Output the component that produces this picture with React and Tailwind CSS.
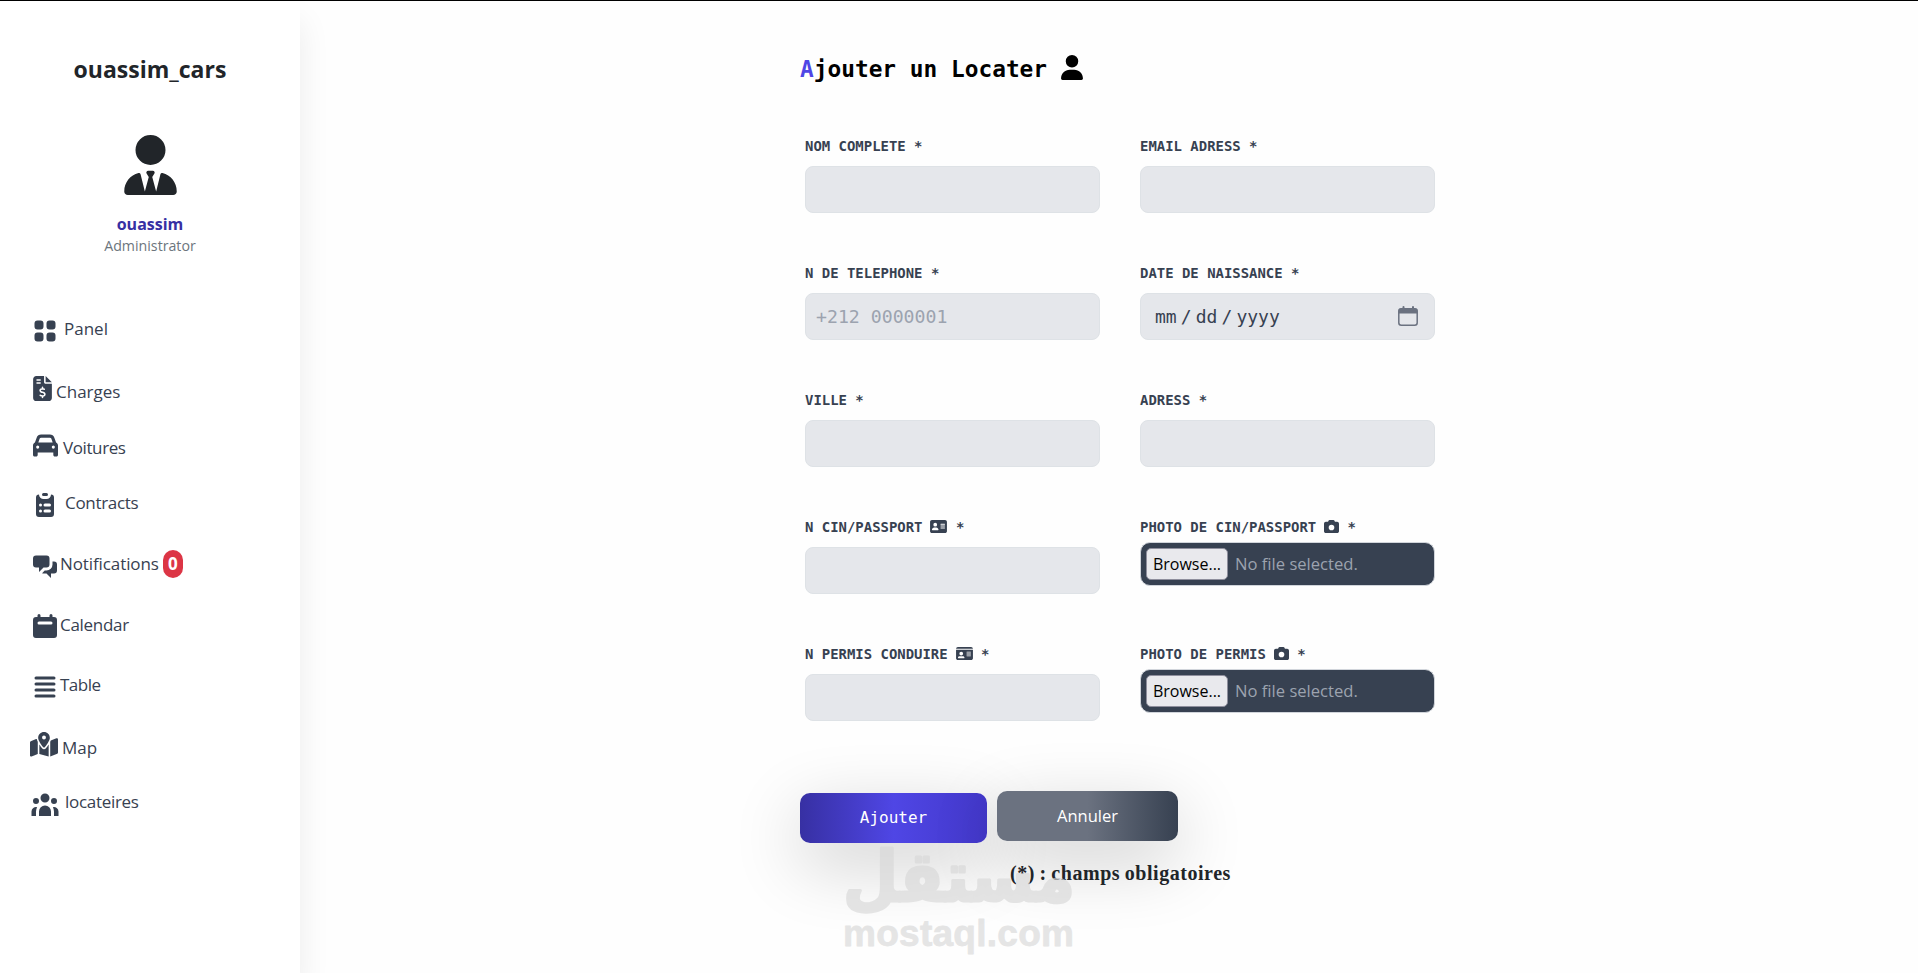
import { HiViewGrid, HiClipboardList, HiChatAlt2, HiCalendar, HiViewList, HiUserGroup } from 'react-icons/hi';
import {
    FaUserTie,
    FaUser,
    FaCar,
    FaFileInvoiceDollar,
    FaMapLocationDot,
    FaAddressCard,
    FaIdCard,
    FaCamera,
} from 'react-icons/fa6';

const menu = [
    { label: 'Panel', Icon: HiViewGrid, icon: 'w-[30px] h-[30px] translate-y-[2px]', row: '', text: 'ml-1' },
    {
        label: 'Charges',
        Icon: FaFileInvoiceDollar,
        icon: 'w-[19px] h-[25px] ml-[3px] -translate-y-[4px]',
        row: 'mt-[33px]',
        text: 'ml-1',
    },
    {
        label: 'Voitures',
        Icon: FaCar,
        icon: 'w-[25px] h-[25px] ml-[3px] -translate-y-[3px]',
        row: 'mt-[26px]',
        text: 'ml-[5px] tracking-[-0.4px]',
    },
    {
        label: 'Contracts',
        Icon: HiClipboardList,
        icon: 'w-[30px] h-[30px] translate-y-[2px]',
        row: 'mt-[25px]',
        text: 'ml-[5px] tracking-[-0.3px]',
    },
    {
        label: 'Notifications',
        Icon: HiChatAlt2,
        icon: 'w-[30px] h-[30px] translate-y-[2px]',
        row: 'mt-[31px]',
        text: 'tracking-[-0.1px]',
        badge: 0,
    },
    {
        label: 'Calendar',
        Icon: HiCalendar,
        icon: 'w-[30px] h-[30px] translate-y-[1px]',
        row: 'mt-[31px]',
        text: 'tracking-[-0.3px]',
    },
    {
        label: 'Table',
        Icon: HiViewList,
        icon: 'w-[30px] h-[30px] translate-y-[2px]',
        row: 'mt-[30px]',
        text: 'tracking-[-0.5px]',
    },
    {
        label: 'Map',
        Icon: FaMapLocationDot,
        icon: 'w-[28px] h-[25px] -translate-y-[4px]',
        row: 'mt-[33px]',
        text: 'ml-1',
    },
    {
        label: 'locateires',
        Icon: HiUserGroup,
        icon: 'w-[30px] h-[30px] translate-y-[2px]',
        row: 'mt-[24px]',
        text: 'ml-[5px] tracking-[-0.3px]',
    },
];

function Sidebar() {
    return (
        <aside className="w-[300px] shrink-0 flex flex-col items-center bg-white pt-[53px] shadow-[0_20px_30px_rgba(0,0,0,0.08)]">
            <h1 className="text-[23px] leading-[30px] font-bold text-[#212529]">ouassim_cars</h1>
            <FaUserTie className="mt-[51px] w-[53px] h-[60px] text-[#212529]" />
            <p className="mt-[17px] text-base leading-6 font-bold text-[#3730a3]">ouassim</p>
            <p className="text-[14.2px] leading-5 text-[#6c757d]">Administrator</p>
            <ul className="mt-[58px] w-full pl-[30px] text-[17px] text-[#374151]">
                {menu.map(({ label, Icon, icon, row, text, badge }) => (
                    <li key={label} className={`flex items-center h-[30px] ${row}`}>
                        <Icon className={`shrink-0 ${icon}`} />
                        <span className={`leading-[30px] ${text}`}>{label}</span>
                        {badge !== undefined && (
                            <span className="ml-1 w-5 h-7 rounded-[10px] bg-[#dc3545] text-center text-[17px] leading-7 font-bold text-white">
                                {badge}
                            </span>
                        )}
                    </li>
                ))}
            </ul>
        </aside>
    );
}

function Field({ label, Icon, iconClass, children }) {
    return (
        <div>
            <label className="flex items-center h-5 whitespace-pre font-['DejaVu_Sans_Mono',monospace] text-[13.95px] leading-5 font-bold uppercase text-[#374151]">
                {label}
                {Icon && <Icon className={`ml-2 ${iconClass}`} />}
                {' *'}
            </label>
            {children}
        </div>
    );
}

function TextInput({ placeholder }) {
    return (
        <input
            type="text"
            placeholder={placeholder}
            className="block mt-[10px] w-full h-[47px] rounded-lg border border-[#dee2e6] bg-[#e5e7eb] px-[10px] font-['DejaVu_Sans_Mono',monospace] text-[18.2px] text-[#374151] placeholder:text-[#9ca3af]"
        />
    );
}

function DateInput() {
    return (
        <div className="mt-[10px] flex items-center w-full h-[47px] rounded-lg border border-[#dee2e6] bg-[#e5e7eb] pl-[14px] pr-4 font-['DejaVu_Sans_Mono',monospace] text-[18px] text-[#374151]">
            <span>mm</span>
            <span className="w-[19px] text-center">/</span>
            <span>dd</span>
            <span className="w-[19px] text-center">/</span>
            <span>yyyy</span>
            <svg viewBox="0 0 20 20" className="ml-auto w-5 h-5 -translate-y-px text-[#6b7280]" fill="none" stroke="currentColor">
                <rect x="0.8" y="2.8" width="18.4" height="16.4" rx="2.5" strokeWidth="1.5" />
                <path d="M0.5 7.5V5a2.7 2.7 0 0 1 2.7-2.7h13.6A2.7 2.7 0 0 1 19.5 5v2.5z" fill="currentColor" stroke="none" />
                <path d="M5.5 1v3M15 1v3" strokeWidth="2" strokeLinecap="round" />
            </svg>
        </div>
    );
}

function FileInput() {
    return (
        <div className="mt-[5px] flex items-center w-full h-[44px] rounded-[10px] border border-[#d1d5db] bg-[#374151] pl-[5px]">
            <button
                type="button"
                className="w-[82px] h-8 rounded-[5px] border border-[#8f8f9d] bg-[#e9e9ed] text-base leading-none whitespace-nowrap text-black"
            >
                Browse...
            </button>
            <span className="ml-[7px] text-[16.6px] text-[#9ca3af]">No file selected.</span>
        </div>
    );
}

function Watermark() {
    return (
        <svg
            className="absolute left-[543px] top-[840px] w-[232px] h-[120px] overflow-visible opacity-65 pointer-events-none"
            fill="#d8d8d8"
            stroke="#d8d8d8"
            strokeLinejoin="round"
        >
            <text
                x="116"
                y="60"
                textAnchor="middle"
                textLength="232"
                lengthAdjust="spacingAndGlyphs"
                strokeWidth="3"
                className="font-['DejaVu_Sans',sans-serif] text-[70px] font-bold"
            >
                مستقل
            </text>
            <text
                x="0"
                y="105"
                textLength="231"
                strokeWidth="0.8"
                className="font-['Liberation_Sans',sans-serif] text-[37px] font-bold"
            >
                mostaql.com
            </text>
        </svg>
    );
}

function App() {
    return (
        <div className="flex h-[973px] overflow-hidden border-t border-black bg-[#fefefe] font-['Open_Sans','Noto_Sans',sans-serif]">
            <Sidebar />
            <main className="relative flex-1 pl-[500px] pt-[52px]">
                <h2 className="flex items-center h-8 font-['DejaVu_Sans_Mono',monospace] text-[22.8px] leading-8 font-bold text-black">
                    <span className="text-[#4f46e5]">A</span>
                    <span>jouter un Locater</span>
                    <FaUser className="ml-[14px] w-[22px] h-[25px] -translate-y-[2px]" />
                </h2>

                <form>
                    <div className="mt-[51px] ml-[5px] grid grid-cols-[295px_295px] gap-x-10 auto-rows-[127px]">
                        <Field label="Nom complete">
                            <TextInput />
                        </Field>
                        <Field label="Email adress">
                            <TextInput />
                        </Field>
                        <Field label="N de telephone">
                            <TextInput placeholder="+212 0000001" />
                        </Field>
                        <Field label="Date de naissance">
                            <DateInput />
                        </Field>
                        <Field label="Ville">
                            <TextInput />
                        </Field>
                        <Field label="Adress">
                            <TextInput />
                        </Field>
                        <Field label="N CIN/Passport" Icon={FaAddressCard} iconClass="w-[17px] h-[15px] -translate-y-px">
                            <TextInput />
                        </Field>
                        <Field label="Photo de CIN/Passport" Icon={FaCamera} iconClass="w-[15px] h-[15px] -translate-y-px">
                            <FileInput />
                        </Field>
                        <Field label="N permis conduire" Icon={FaIdCard} iconClass="w-[17px] h-[15px] -translate-y-px">
                            <TextInput />
                        </Field>
                        <Field label="Photo de permis" Icon={FaCamera} iconClass="w-[15px] h-[15px] -translate-y-px">
                            <FileInput />
                        </Field>
                    </div>

                    <div className="mt-5 flex items-start gap-[10px] text-white">
                        <button
                            type="button"
                            className="mt-[2px] w-[187px] h-[50px] rounded-[10px] bg-linear-to-r from-[#3730a3] via-[#4f46e5] to-[#4338ca] font-['DejaVu_Sans_Mono',monospace] text-base shadow-[0_20px_70px_rgba(0,0,0,0.2)]"
                        >
                            Ajouter
                        </button>
                        <button
                            type="button"
                            className="w-[181px] h-[50px] rounded-[10px] bg-linear-to-r from-[#6b7280] via-[#6b7280] to-[#374151] pt-px text-[16.5px] shadow-[0_20px_70px_rgba(0,0,0,0.2)]"
                        >
                            Annuler
                        </button>
                    </div>
                </form>

                <p className="relative mt-4 pl-[210px] font-['Liberation_Serif',serif] text-[20px] leading-7 font-bold tracking-[0.55px] [word-spacing:-1px] text-[#212529]">
                    (*) : champs obligatoires
                </p>
                <Watermark />
            </main>
        </div>
    );
}

export default App;
